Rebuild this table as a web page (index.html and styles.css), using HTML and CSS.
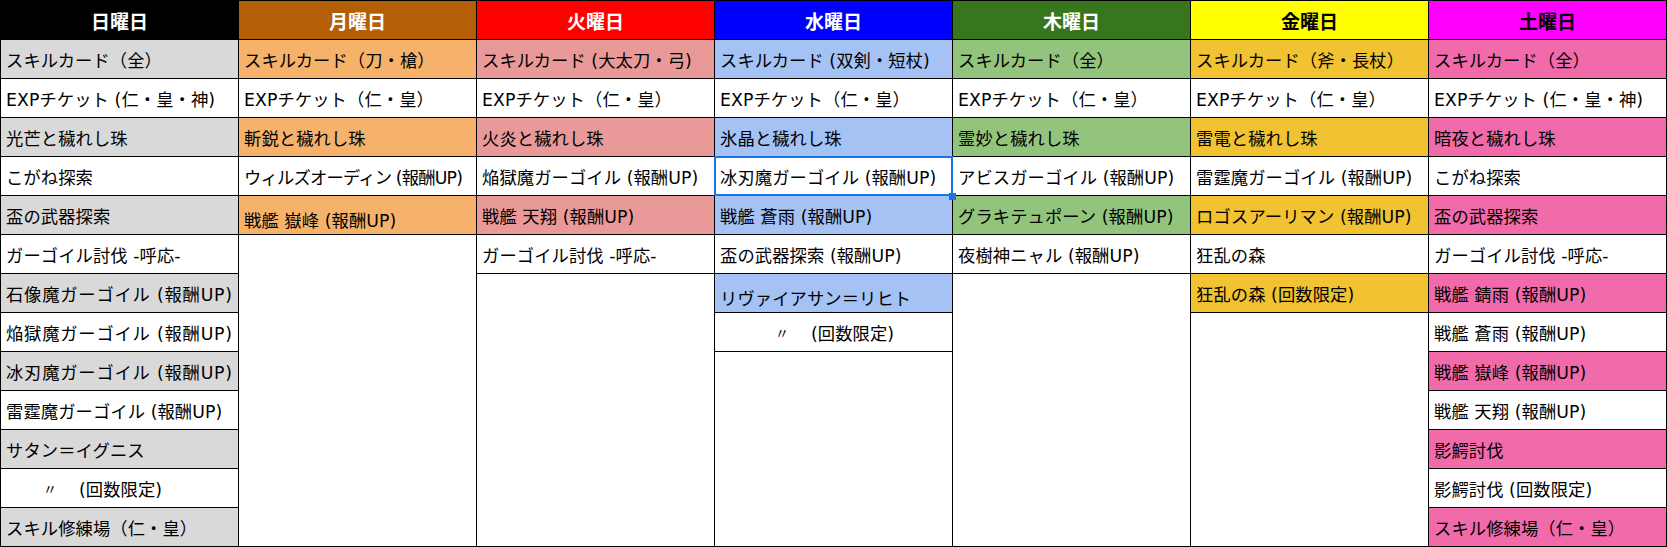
FILE: index.html
```html
<!DOCTYPE html>
<html lang="ja">
<head>
<meta charset="utf-8">
<title>曜日表</title>
<link rel="stylesheet" href="styles.css">
</head>
<body>
<div class="sheet">
  <div class="head">
    <div class="hcell sun">日曜日</div>
    <div class="hcell mon">月曜日</div>
    <div class="hcell tue">火曜日</div>
    <div class="hcell wed">水曜日</div>
    <div class="hcell thu">木曜日</div>
    <div class="hcell fri">金曜日</div>
    <div class="hcell sat">土曜日</div>
  </div>
  <div class="body">
    <div class="col c-sun">
      <div class="cell hl">スキルカード（全）</div>
      <div class="cell">EXPチケット (仁・皇・神)</div>
      <div class="cell hl">光芒と穢れし珠</div>
      <div class="cell">こがね探索</div>
      <div class="cell hl">盃の武器探索</div>
      <div class="cell">ガーゴイル討伐 -呼応-</div>
      <div class="cell hl wide">石像魔ガーゴイル (報酬UP)</div>
      <div class="cell wide">焔獄魔ガーゴイル (報酬UP)</div>
      <div class="cell hl wide">冰刃魔ガーゴイル (報酬UP)</div>
      <div class="cell">雷霆魔ガーゴイル (報酬UP)</div>
      <div class="cell hl">サタン＝イグニス</div>
      <div class="cell ditto-a"><span class="ditto">〃</span>(回数限定)</div>
      <div class="cell hl">スキル修練場（仁・皇）</div>
    </div>
    <div class="col c-mon">
      <div class="cell hl">スキルカード（刀・槍）</div>
      <div class="cell">EXPチケット（仁・皇）</div>
      <div class="cell hl">斬鋭と穢れし珠</div>
      <div class="cell tight">ウィルズオーディン (報酬UP)</div>
      <div class="cell hl bottom">戦艦 嶽峰 (報酬UP)</div>
    </div>
    <div class="col c-tue">
      <div class="cell hl">スキルカード (大太刀・弓)</div>
      <div class="cell">EXPチケット（仁・皇）</div>
      <div class="cell hl">火炎と穢れし珠</div>
      <div class="cell">焔獄魔ガーゴイル (報酬UP)</div>
      <div class="cell hl">戦艦 天翔 (報酬UP)</div>
      <div class="cell">ガーゴイル討伐 -呼応-</div>
    </div>
    <div class="col c-wed">
      <div class="cell hl">スキルカード (双剣・短杖)</div>
      <div class="cell">EXPチケット（仁・皇）</div>
      <div class="cell hl">氷晶と穢れし珠</div>
      <div class="cell selected">冰刃魔ガーゴイル (報酬UP)<span class="handle"></span></div>
      <div class="cell hl">戦艦 蒼雨 (報酬UP)</div>
      <div class="cell">盃の武器探索 (報酬UP)</div>
      <div class="cell hl bottom">リヴァイアサン＝リヒト</div>
      <div class="cell ditto-b"><span class="ditto">〃</span>(回数限定)</div>
    </div>
    <div class="col c-thu">
      <div class="cell hl">スキルカード（全）</div>
      <div class="cell">EXPチケット（仁・皇）</div>
      <div class="cell hl">霊妙と穢れし珠</div>
      <div class="cell">アビスガーゴイル (報酬UP)</div>
      <div class="cell hl">グラキテュポーン (報酬UP)</div>
      <div class="cell">夜樹神ニャル (報酬UP)</div>
    </div>
    <div class="col c-fri">
      <div class="cell hl">スキルカード（斧・長杖）</div>
      <div class="cell">EXPチケット（仁・皇）</div>
      <div class="cell hl">雷電と穢れし珠</div>
      <div class="cell">雷霆魔ガーゴイル (報酬UP)</div>
      <div class="cell hl">ロゴスアーリマン (報酬UP)</div>
      <div class="cell">狂乱の森</div>
      <div class="cell hl">狂乱の森 (回数限定)</div>
    </div>
    <div class="col c-sat">
      <div class="cell hl">スキルカード（全）</div>
      <div class="cell">EXPチケット (仁・皇・神)</div>
      <div class="cell hl">暗夜と穢れし珠</div>
      <div class="cell">こがね探索</div>
      <div class="cell hl">盃の武器探索</div>
      <div class="cell">ガーゴイル討伐 -呼応-</div>
      <div class="cell hl">戦艦 錆雨 (報酬UP)</div>
      <div class="cell">戦艦 蒼雨 (報酬UP)</div>
      <div class="cell hl">戦艦 嶽峰 (報酬UP)</div>
      <div class="cell">戦艦 天翔 (報酬UP)</div>
      <div class="cell hl">影鰐討伐</div>
      <div class="cell">影鰐討伐 (回数限定)</div>
      <div class="cell hl">スキル修練場（仁・皇）</div>
    </div>
  </div>
</div>
</body>
</html>
```
FILE: styles.css
```css
html, body {
  margin: 0;
  padding: 0;
  background: #ffffff;
}

body {
  font-family: "DejaVu Sans", "Noto Sans CJK JP", sans-serif;
  color: #000000;
}

.sheet {
  width: 1667px;
  border-top: 1px solid #000;
  box-sizing: border-box;
}

.head {
  display: grid;
  grid-template-columns: repeat(7, 238px);
  border-left: 1px solid #000;
  width: 1667px;
  box-sizing: border-box;
}

.hcell {
  height: 38px;
  display: flex;
  align-items: center;
  justify-content: center;
  font-family: "Noto Sans CJK JP", sans-serif;
  font-size: 19px;
  font-weight: 700;
  color: #ffffff;
  border-right: 1px solid #000;
  border-bottom: 1px solid #000;
  width: 237px;
}

.sun { background: #000000; }
.mon { background: #b45f06; }
.tue { background: #ff0000; }
.wed { background: #0000ff; }
.thu { background: #38761d; }
.fri { background: #ffff00; color: #000; }
.sat { background: #ff00ff; color: #000; }

.body {
  display: grid;
  grid-template-columns: repeat(7, 238px);
  grid-template-rows: 507px;
  border-left: 1px solid #000;
  width: 1667px;
  box-sizing: border-box;
}

.col {
  display: flex;
  flex-direction: column;
  border-right: 1px solid #000;
  width: 237px;
  box-shadow: inset 0 -1px 0 #000;
  background: #ffffff;
}

.cell {
  height: 38px;
  flex: 0 0 38px;
  border-bottom: 1px solid #000;
  display: flex;
  align-items: center;
  padding-left: 5px;
  font-size: 17.3px;
  letter-spacing: 0.1px;
  white-space: nowrap;
  background: #ffffff;
}

.cell.wide {
  letter-spacing: 0.8px;
}

.cell.tight {
  letter-spacing: -0.8px;
}

.cell.bottom {
  align-items: flex-end;
  line-height: 26px;
}

.c-sun .hl { background: #d9d9d9; }
.c-mon .hl { background: #f6b26b; }
.c-tue .hl { background: #ea9999; }
.c-wed .hl { background: #a4c2f4; }
.c-thu .hl { background: #93c47d; }
.c-fri .hl { background: #f1c232; }
.c-sat .hl { background: #f16baa; }

.ditto {
  display: inline-block;
  width: 36px;
  font-size: 14px;
}

.ditto-a { padding-left: 42px; }
.ditto-b { padding-left: 60px; }

.selected {
  position: relative;
}

.selected::after {
  content: "";
  position: absolute;
  left: -1px;
  top: -1px;
  right: -1px;
  bottom: -1px;
  border: 2px solid #1a73e8;
  pointer-events: none;
}

.handle {
  position: absolute;
  right: -4px;
  bottom: -5px;
  width: 7px;
  height: 7px;
  background: #1a73e8;
  z-index: 2;
}
```
